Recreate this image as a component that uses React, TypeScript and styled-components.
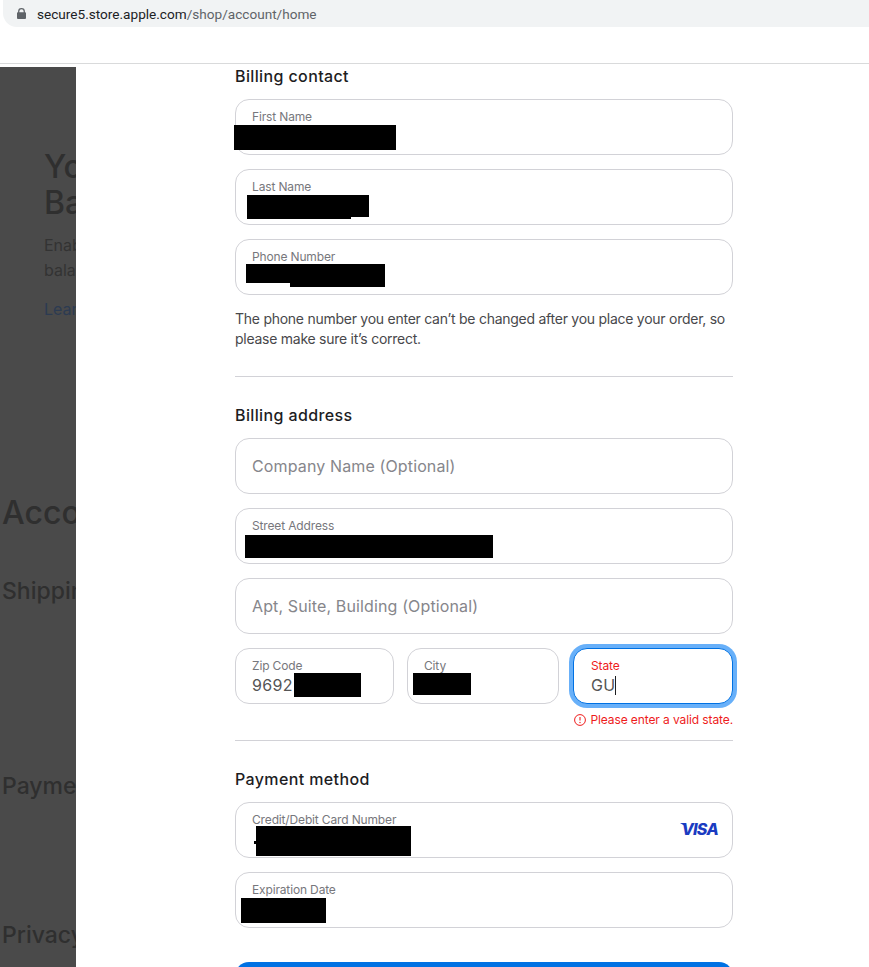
import React from "react";
import styled, { createGlobalStyle } from "styled-components";

const GlobalStyle = createGlobalStyle`
  html, body {
    margin: 0;
    padding: 0;
    background: #fff;
  }
  * {
    box-sizing: border-box;
  }
`;

type Patch = { x: number; y: number; w: number; h: number };

const LockIcon = () => (
  <svg width="9" height="11" viewBox="0 0 10 12">
    <path
      d="M1.2 4.5V3.8a3.8 3.8 0 0 1 7.6 0v.7h.2c.6 0 1 .4 1 1V11c0 .6-.4 1-1 1H1c-.6 0-1-.4-1-1V5.500c0-.6.4-1 1-1h.2zm1.400 0h4.800v-.7a2.400 2.400 0 0 0-4.800 0v.7z"
      fill="#5f6368"
      fillRule="evenodd"
    />
  </svg>
);

const AlertIcon = () => (
  <svg width="12" height="12" viewBox="0 0 12 12" fill="none">
    <circle cx="6" cy="6" r="5.4" stroke="#ee1c1c" strokeWidth="1" />
    <path d="M6 2.900v3.700" stroke="#ee1c1c" strokeWidth="1.100" />
    <circle cx="6" cy="8.500" r="0.700" fill="#ee1c1c" />
  </svg>
);

function Field({
  label,
  value,
  placeholder,
  patches = [],
  invalid,
  caret,
  children
}: {
  label?: string;
  value?: string;
  placeholder?: string;
  patches?: Patch[];
  invalid?: boolean;
  caret?: boolean;
  children?: React.ReactNode;
}) {
  return (
    <FieldBox $invalid={invalid}>
      {placeholder ? (
        <Placeholder>{placeholder}</Placeholder>
      ) : (
        <>
          <FieldLabel $invalid={invalid}>{label}</FieldLabel>
          <FieldValue>
            {value}
            {caret && <Caret />}
          </FieldValue>
        </>
      )}
      {patches.map(p => (
        <Redaction
          key={`${p.x}-${p.y}`}
          style={{ left: p.x, top: p.y, width: p.w, height: p.h }}
        />
      ))}
      {children}
    </FieldBox>
  );
}

export default function App() {
  return (
    <>
      <GlobalStyle />
      <Page>
        <AddressBar>
          <LockIcon />
          <UrlText>
            secure5.store.apple.com<UrlPath>/shop/account/home</UrlPath>
          </UrlText>
        </AddressBar>
        <BookmarkStrip />
        <Content>
          <DimmedPage>
            <CardBlock>
              <CardTitle>
                Your Apple
                <br />
                Balance
              </CardTitle>
              <CardText>
                Enable your Apple
                <br />
                balance
              </CardText>
              <CardLink>Learn more</CardLink>
            </CardBlock>
            <AccountTitle>Account Settings</AccountTitle>
            <SectionName $top={44}>Shipping</SectionName>
            <SectionName $top={167}>Payment</SectionName>
            <SectionName $top={121}>Privacy</SectionName>
          </DimmedPage>
          <Sheet>
            <Form>
              <Heading $top={-1}>Billing contact</Heading>
              <Fields>
                <Field
                  label="First Name"
                  patches={[{ x: -2, y: 25, w: 162, h: 25 }]}
                />
                <Field
                  label="Last Name"
                  patches={[
                    { x: 11, y: 25, w: 122, h: 22 },
                    { x: 11, y: 47, w: 104, h: 2 }
                  ]}
                />
                <Field
                  label="Phone Number"
                  patches={[
                    { x: 10, y: 24, w: 139, h: 19 },
                    { x: 54, y: 43, w: 95, h: 4 }
                  ]}
                />
              </Fields>
              <Note>
                The phone number you enter can’t be changed after you place your
                order, so
                <br />
                please make sure it’s correct.
              </Note>
              <Divider $top={27} />
              <Heading $top={28}>Billing address</Heading>
              <Fields>
                <Field placeholder="Company Name (Optional)" />
                <Field
                  label="Street Address"
                  patches={[{ x: 9, y: 26, w: 248, h: 23 }]}
                />
                <Field placeholder="Apt, Suite, Building (Optional)" />
                <AddressRow>
                  <Field
                    label="Zip Code"
                    value="9692"
                    patches={[{ x: 58, y: 24, w: 67, h: 24 }]}
                  />
                  <Field
                    label="City"
                    patches={[{ x: 5, y: 24, w: 58, h: 22 }]}
                  />
                  <Field label="State" value="GU" invalid caret />
                </AddressRow>
              </Fields>
              <ErrorLine>
                <AlertIcon />
                Please enter a valid state.
              </ErrorLine>
              <Divider $top={13} />
              <Heading $top={28}>Payment method</Heading>
              <Fields>
                <Field
                  label="Credit/Debit Card Number"
                  patches={[
                    { x: 20, y: 23, w: 155, h: 30 },
                    { x: 18, y: 38, w: 3, h: 3 }
                  ]}
                >
                  <VisaMark>VISA</VisaMark>
                </Field>
                <Field
                  label="Expiration Date"
                  patches={[{ x: 5, y: 25, w: 85, h: 25 }]}
                />
              </Fields>
              <SubmitButton />
            </Form>
          </Sheet>
        </Content>
      </Page>
    </>
  );
}

const Page = styled.div`
  height: 967px;
  width: 869px;
  overflow: hidden;
  display: flex;
  flex-direction: column;
  background: #fff;
  font-family: Inter, "Liberation Sans", sans-serif;
`;

const AddressBar = styled.div`
  height: 27px;
  margin-left: 3px;
  padding-left: 14px;
  display: flex;
  align-items: center;
  gap: 11px;
  background: #f1f3f4;
  border-bottom-left-radius: 14px;
`;

const UrlText = styled.div`
  font-family: Roboto, "Liberation Sans", sans-serif;
  font-size: 13.6px;
  color: #202124;
`;

const UrlPath = styled.span`
  color: #5f6368;
`;

const BookmarkStrip = styled.div`
  height: 37px;
  border-bottom: 1px solid #d9dadb;
`;

const Content = styled.div`
  flex: 1;
  min-height: 0;
  margin-top: 3px;
  display: flex;
`;

const DimmedPage = styled.div`
  width: 76px;
  flex: none;
  overflow: hidden;
  background: #4a4a4a;
  white-space: nowrap;
  color: #2f2f2f;
`;

const CardBlock = styled.div`
  padding: 82px 0 0 44px;
`;

const CardTitle = styled.div`
  font-size: 32px;
  line-height: 36px;
  font-weight: 500;
`;

const CardText = styled.div`
  margin-top: 12px;
  font-size: 16px;
  line-height: 25px;
  color: #333;
`;

const CardLink = styled.div`
  margin-top: 14px;
  font-size: 16px;
  line-height: 24px;
  color: #2c3b52;
`;

const AccountTitle = styled.div`
  margin: 172px 0 0 2px;
  font-size: 32px;
  line-height: 40px;
  font-weight: 500;
`;

const SectionName = styled.div<{ $top: number }>`
  margin: ${p => p.$top}px 0 0 2px;
  font-size: 23px;
  line-height: 28px;
  font-weight: 500;
`;

const Sheet = styled.div`
  flex: 1;
  padding-left: 159px;
  background: #fff;
`;

const Form = styled.div`
  width: 498px;
`;

const Heading = styled.h2<{ $top?: number }>`
  margin: ${p => p.$top ?? 0}px 0 13px;
  font-size: 16px;
  line-height: 20px;
  font-weight: 500;
  letter-spacing: 0.38px;
  color: #1d1d1f;
`;

const Fields = styled.div`
  display: flex;
  flex-direction: column;
  gap: 14px;
`;

const AddressRow = styled.div`
  display: grid;
  grid-template-columns: 159px 152px 160px;
  column-gap: 13px;

  > :last-child {
    margin-left: 1px;
    margin-right: -1px;
  }
`;

const FieldBox = styled.div<{ $invalid?: boolean }>`
  position: relative;
  height: 56px;
  padding: 10px 16px 0 ${p => (p.$invalid ? 17 : 16)}px;
  border-radius: 14px;
  background: #fff;
  border: 1px solid ${p => (p.$invalid ? "#0071e3" : "#d2d2d7")};
  box-shadow: ${p => (p.$invalid ? "0 0 0 4px #68b0f9" : "none")};
`;

const FieldLabel = styled.div<{ $invalid?: boolean }>`
  font-size: 12px;
  line-height: 14px;
  letter-spacing: -0.15px;
  color: ${p => (p.$invalid ? "#ee1c1c" : "#77777c")};
`;

const FieldValue = styled.div`
  display: flex;
  align-items: center;
  margin-top: 2px;
  font-size: 16px;
  line-height: 21px;
  letter-spacing: 0.3px;
  color: #555;
`;

const Caret = styled.span`
  width: 1px;
  height: 19px;
  background: #1d1d1f;
`;

const Placeholder = styled.div`
  margin-top: 7px;
  font-size: 16px;
  line-height: 21px;
  letter-spacing: 0.13px;
  color: #86868b;
`;

const Redaction = styled.div`
  position: absolute;
  background: #000;
`;

const VisaMark = styled.span`
  position: absolute;
  right: 14px;
  top: 16px;
  font-size: 16px;
  line-height: 20px;
  font-weight: 800;
  font-style: italic;
  letter-spacing: -0.7px;
  color: #1a3bc1;

  &::before {
    content: "";
    position: absolute;
    left: -1px;
    top: 4px;
    border-top: 3px solid #1a3bc1;
    border-left: 5px solid transparent;
  }
`;

const Note = styled.p`
  margin: 14px 0 0;
  font-size: 14px;
  line-height: 20px;
  letter-spacing: -0.26px;
  color: #48484b;
`;

const Divider = styled.div<{ $top: number }>`
  height: 1px;
  margin-top: ${p => p.$top}px;
  background: #d2d2d7;
`;

const ErrorLine = styled.div`
  margin-top: 8px;
  display: flex;
  justify-content: flex-end;
  align-items: center;
  gap: 4px;
  font-size: 12px;
  line-height: 15px;
  letter-spacing: -0.1px;
  color: #ee1c1c;
`;

const SubmitButton = styled.div`
  height: 56px;
  margin-top: 34px;
  border-radius: 14px;
  background: #0071e3;
`;
